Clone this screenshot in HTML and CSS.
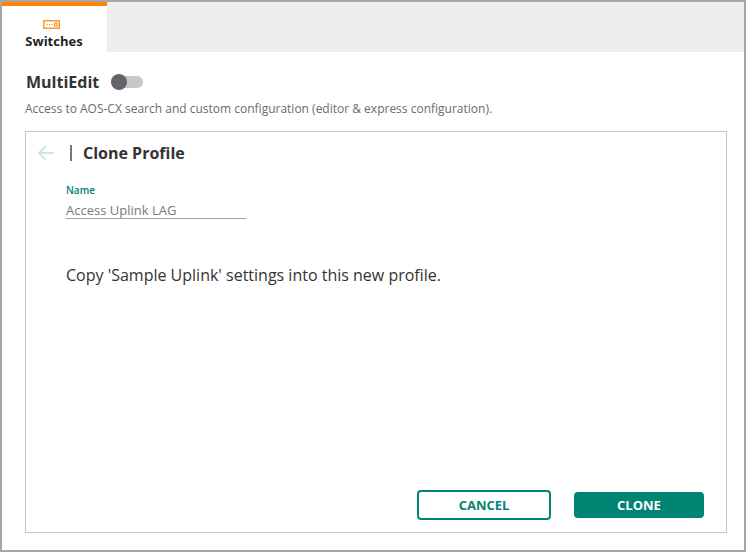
FILE: index.html
```html
<!DOCTYPE html>
<html lang="en">
<head>
<meta charset="utf-8">
<title>Clone Profile</title>
<link rel="stylesheet" href="styles.css">
</head>
<body>
<div class="frame">
  <div class="tabbar">
    <div class="tab">
      <svg class="tab-icon" width="17" height="9" viewBox="0 0 17 9" aria-hidden="true">
        <rect x="0.75" y="0.75" width="15.5" height="7.5" fill="#fff" stroke="#ff9a2e" stroke-width="1.5"/>
        <path d="M3.5 4.5h1M6 4.5h1M8.5 4.5h1" stroke="#ff8300" stroke-width="1"/>
        <rect x="11.5" y="3" width="2.5" height="3" fill="none" stroke="#ff8300"/>
      </svg>
      <span class="tab-label">Switches</span>
    </div>
  </div>
  <div class="content">
    <div class="multi">
      <span class="multi-title">MultiEdit</span>
      <span class="toggle"><span class="knob"></span></span>
    </div>
    <p class="desc">Access to AOS-CX search and custom configuration (editor &amp; express configuration).</p>
    <div class="card">
      <div class="card-head">
        <svg class="back" width="18" height="16" viewBox="0 0 18 16" aria-hidden="true">
          <path d="M17 8H2M8.5 1.5L2 8l6.5 6.5" fill="none" stroke="#cbe8e3" stroke-width="2"/>
        </svg>
        <span class="divider"></span>
        <h1 class="card-title">Clone Profile</h1>
      </div>
      <div class="card-body">
        <div class="field">
          <label class="field-label">Name</label>
          <div class="field-value">Access Uplink LAG</div>
        </div>
        <p class="message">Copy 'Sample Uplink' settings into this new profile.</p>
      </div>
      <div class="actions">
        <button class="btn btn-outline">CANCEL</button>
        <button class="btn btn-solid">CLONE</button>
      </div>
    </div>
  </div>
</div>
</body>
</html>
```
FILE: styles.css
```css
* { box-sizing: border-box; }
html, body { margin: 0; padding: 0; background: #fff; }
body { font-family: "Open Sans", sans-serif; color: #2b2b2b; }
.frame {
  width: 746px;
  height: 552px;
  border: 2px solid #a6a6a6;
  display: flex;
  flex-direction: column;
  background: #fff;
}
.tabbar { height: 50px; background: #eeeeee; display: flex; flex: none; }
.tab {
  width: 105px;
  background: #fff;
  border-top: 4px solid #ff8300;
  display: flex;
  flex-direction: column;
  align-items: center;
  padding-top: 14px;
}
.tab-icon { display: block; margin-left: -6px; }
.tab-label { font-size: 13px; font-weight: 700; line-height: 16px; margin-top: 4px; color: #1f1f1f; margin-right: 1px; }
.content { padding: 0 17px 0 24px; flex: 1; display: flex; flex-direction: column; min-height: 0; }
.multi { display: flex; align-items: center; height: 24px; margin-top: 18px; }
.multi-title { font-size: 16px; font-weight: 700; color: #333; line-height: 24px; }
.toggle { width: 32px; height: 12px; border-radius: 6px; background: #c8c8cc; margin-left: 12px; display: block; position: relative; }
.knob { position: absolute; left: 0; top: -2px; width: 16px; height: 16px; border-radius: 50%; background: #63636a; }
.desc { margin: 7px 0 0 -1px; font-size: 12px; line-height: 16px; color: #6b6b6b; }
.card {
  margin: 14px 0 0 -1px;
  width: 702px;
  height: 402px;
  border: 1px solid #c6c6c6;
  display: flex;
  flex-direction: column;
}
.card-head { display: flex; align-items: center; height: 42px; padding-left: 11px; flex: none; }
.back { display: block; }
.divider { width: 2px; height: 16px; background: #777; margin-left: 15px; margin-top: -1px; }
.card-title { margin: 0 0 0 11px; font-size: 16px; font-weight: 700; line-height: 20px; color: #333; }
.card-body { flex: 1; padding: 9px 0 0 40px; }
.field { width: 180px; }
.field-label { display: block; font-size: 10px; font-weight: 600; line-height: 14px; color: #00806f; }
.field-value { font-size: 13px; line-height: 16px; height: 22px; padding-top: 5px; color: #7a7a7a; border-bottom: 1px solid #a3a3a3; }
.message { margin: 46px 0 0; font-size: 16px; line-height: 20px; color: #333; }
.actions { display: flex; align-items: center; justify-content: flex-end; gap: 23px; padding-right: 22px; height: 30px; margin-bottom: 12px; flex: none; }
.btn { font-family: inherit; font-size: 13px; font-weight: 700; border-radius: 4px; padding: 0; cursor: pointer; }
.btn-outline { width: 134px; height: 30px; background: #fff; color: #008575; border: 2px solid #008575; }
.btn-solid { width: 130px; height: 26px; background: #008575; color: #fff; border: 0; }
```
